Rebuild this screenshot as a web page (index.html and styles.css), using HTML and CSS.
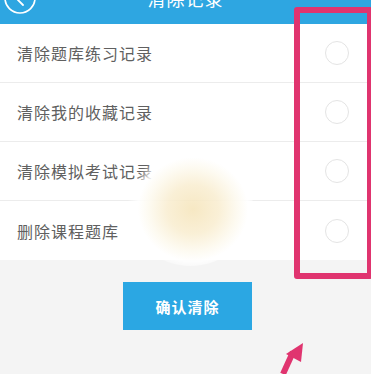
FILE: index.html
```html
<!DOCTYPE html>
<html lang="zh">
<head>
<meta charset="utf-8">
<link rel="stylesheet" href="styles.css">
</head>
<body>
<div class="page">
  <header class="topbar">
    <svg class="back" width="32" height="32" viewBox="0 0 32 32">
      <circle cx="16" cy="16" r="15" fill="none" stroke="#fff" stroke-width="1.6"/>
      <path d="M19 9 L12 16 L19 23" fill="none" stroke="#fff" stroke-width="1.8" stroke-linecap="round" stroke-linejoin="round"/>
    </svg>
    <h1 class="title">清除记录</h1>
  </header>
  <ul class="list">
    <li class="row"><span class="label">清除题库练习记录</span><span class="radio"></span></li>
    <li class="row"><span class="label">清除我的收藏记录</span><span class="radio"></span></li>
    <li class="row"><span class="label">清除模拟考试记录</span><span class="radio"></span></li>
    <li class="row"><span class="label">删除课程题库</span><span class="radio"></span></li>
  </ul>
  <div class="actions">
    <button class="confirm">确认清除</button>
  </div>
</div>
<div class="blob"></div>
<div class="mark-box"></div>
<svg class="mark-arrow" width="40" height="40" viewBox="0 0 40 40">
  <path d="M12 40 L22 18" stroke="#e0346f" stroke-width="6" fill="none"/>
  <path d="M32 9 L15 20 L30 28 Z" fill="#e0346f"/>
</svg>
</body>
</html>
```

FILE: styles.css
```css
* { box-sizing: border-box; }
html, body {
  margin: 0;
  padding: 0;
  width: 371px;
  height: 374px;
  overflow: hidden;
  background: #f4f4f4;
  font-family: "Noto Sans CJK SC", "Noto Sans", sans-serif;
}
.page {
  margin-top: -28px;
}
.topbar {
  height: 52px;
  background: #2ea6e1;
  display: flex;
  align-items: center;
  justify-content: center;
  position: relative;
}
.back {
  position: absolute;
  left: 4px;
  top: 10px;
}
.title {
  margin: 0;
  color: #fff;
  font-size: 18px;
  font-weight: 400;
  letter-spacing: 1px;
}
.list {
  list-style: none;
  margin: 0;
  padding: 0;
  background: #fff;
}
.row {
  height: 59px;
  display: flex;
  align-items: center;
  justify-content: space-between;
  padding: 0 22px 0 17px;
  border-bottom: 1px solid #ececec;
}
.row:last-child {
  border-bottom: none;
}
.label {
  font-size: 16px;
  color: #606060;
  letter-spacing: 1px;
}
.radio {
  width: 24px;
  height: 24px;
  border-radius: 50%;
  border: 1.5px solid #e4e4e4;
}
.actions {
  padding: 22px 0 0 123px;
}
.confirm {
  width: 129px;
  height: 48px;
  border: none;
  background: #2ba7e3;
  color: #fff;
  font-family: "Noto Sans CJK SC", sans-serif;
  font-size: 15px;
  font-weight: 700;
  letter-spacing: 1px;
  padding: 0;
}
.blob {
  position: absolute;
  left: 128px;
  top: 148px;
  width: 125px;
  height: 118px;
  border-radius: 50%;
  background: radial-gradient(ellipse at 52% 52%, rgba(245,228,185,0.85) 0%, rgba(249,238,210,0.9) 28%, rgba(253,250,240,0.95) 48%, rgba(255,255,255,0.85) 60%, rgba(255,255,255,0) 72%);
}
.mark-box {
  position: absolute;
  left: 294px;
  top: 7px;
  width: 79px;
  height: 272px;
  border: 6px solid #e0346f;
  border-radius: 3px;
}
.mark-arrow {
  position: absolute;
  left: 271px;
  top: 334px;
}
```
